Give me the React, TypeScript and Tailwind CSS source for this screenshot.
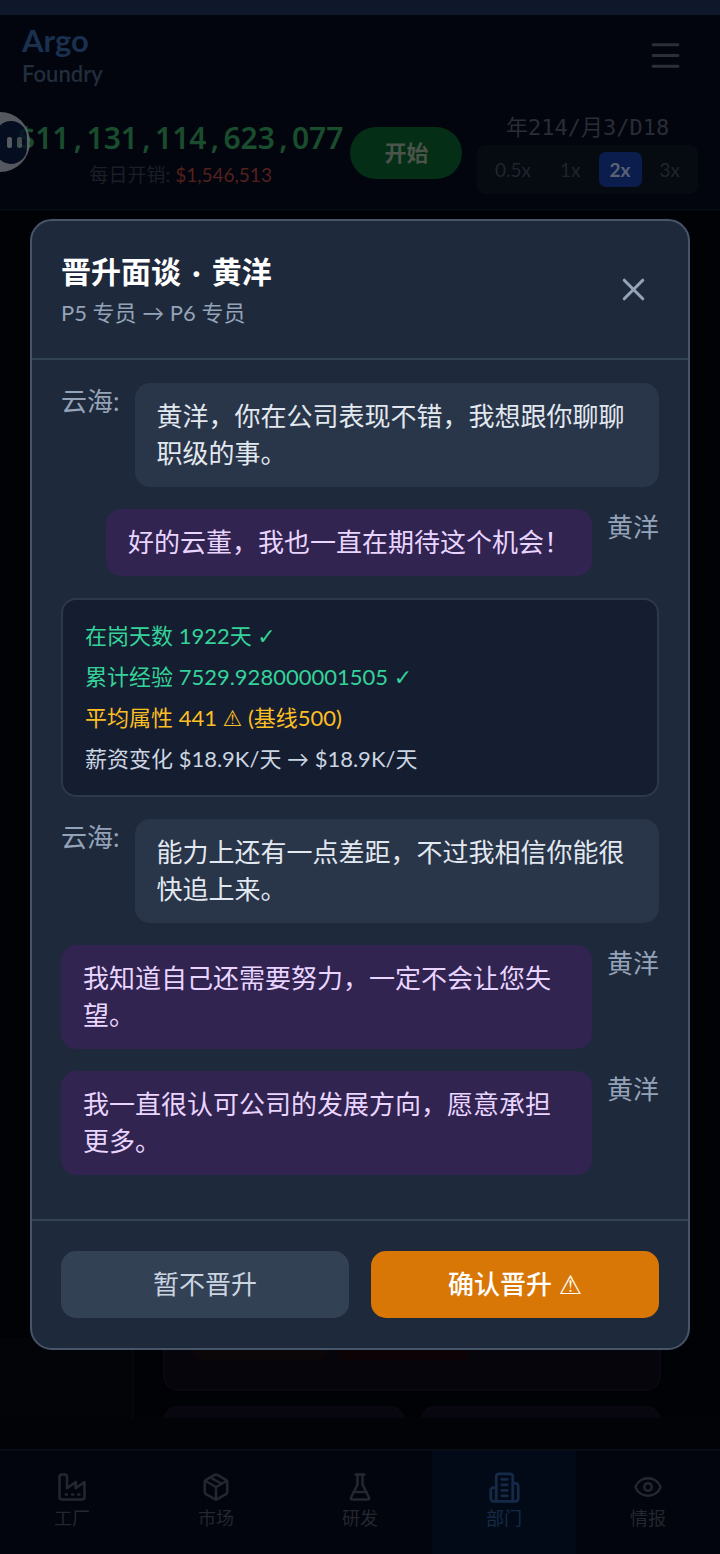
import { Package, Eye, Menu, X } from "lucide-react";
import type { ReactNode } from "react";

const speeds = ["0.5x", "1x", "2x", "3x"];

type IconProps = { size: number };

function Stroke({ size, children }: IconProps & { children: ReactNode }) {
  return (
    <svg
      width={size}
      height={size}
      viewBox="0 0 24 24"
      fill="none"
      stroke="currentColor"
      strokeWidth={2}
      strokeLinecap="round"
      strokeLinejoin="round"
      aria-hidden="true"
    >
      {children}
    </svg>
  );
}

function FactoryIcon({ size }: IconProps) {
  return (
    <Stroke size={size}>
      <path d="M2 20a2 2 0 0 0 2 2h16a2 2 0 0 0 2-2V8l-7 5V8l-7 5V4a2 2 0 0 0-2-2H4a2 2 0 0 0-2 2Z" />
      <path d="M17 18h1M12 18h1M7 18h1" />
    </Stroke>
  );
}

function FlaskIcon({ size }: IconProps) {
  return (
    <Stroke size={size}>
      <path d="M10 2v7.53a2 2 0 0 1-.21.9L4.72 20.55a1 1 0 0 0 .9 1.45h12.76a1 1 0 0 0 .9-1.45l-5.07-10.12a2 2 0 0 1-.21-.9V2" />
      <path d="M8.5 2h7M7 16h10" />
    </Stroke>
  );
}

function BuildingIcon({ size }: IconProps) {
  return (
    <Stroke size={size}>
      <path d="M6 22V4a2 2 0 0 1 2-2h8a2 2 0 0 1 2 2v18Z" />
      <path d="M6 12H4a2 2 0 0 0-2 2v6a2 2 0 0 0 2 2h2M18 9h2a2 2 0 0 1 2 2v9a2 2 0 0 1-2 2h-2" />
      <path d="M10 6h4M10 10h4M10 14h4M10 18h4" />
    </Stroke>
  );
}

const tabs = [
  { label: "工厂", Icon: FactoryIcon },
  { label: "市场", Icon: Package },
  { label: "研发", Icon: FlaskIcon },
  { label: "部门", Icon: BuildingIcon, active: true },
  { label: "情报", Icon: Eye },
];

function Symbol({ children }: { children: string }) {
  return <span className="font-['DejaVu_Sans',sans-serif] leading-none font-normal">{children}</span>;
}

function Money({ value }: { value: string }) {
  const groups = value.split(",");
  return (
    <p className="whitespace-nowrap font-['Noto_Sans',sans-serif] text-[30px] leading-[37px] font-semibold text-[#1a4c2e]">
      {groups.map((group, i) => (
        <span key={i}>
          {group}
          {i < groups.length - 1 && <span className="inline-block w-[17px] text-center">,</span>}
        </span>
      ))}
    </p>
  );
}

function Header() {
  return (
    <header className="relative border-b-2 border-[#060a12] bg-[#02050d]">
      <div className="flex items-start justify-between pt-[7px] pr-[36px] pl-[22px]">
        <div>
          <h1 className="text-[31px] leading-[37px] font-bold text-[#19304f]">Argo</h1>
          <p className="text-[22px] leading-[30px] font-semibold text-[#222d3d]">Foundry</p>
        </div>
        <button type="button" aria-label="菜单" className="mt-[15px] text-[#2b2f38]">
          <Menu size={37} strokeWidth={2} />
        </button>
      </div>
      <div className="flex items-start gap-[7px] pt-[22px] pr-[22px] pb-[15px] pl-[18px]">
        <div className="pt-[8px] text-center">
          <Money value="$11,131,114,623,077" />
          <p className="text-[19px] leading-[37px] text-[#1a1f27]">
            每日开销: <span className="text-[#54201f]">$1,546,513</span>
          </p>
        </div>
        <button
          type="button"
          className="mt-[16px] shrink-0 rounded-full bg-[#052e16] px-[34px] text-[22px] leading-[52px] font-bold text-[#4a544a]"
        >
          开始
        </button>
        <div className="ml-auto flex flex-col items-center">
          <p className="font-['DejaVu_Sans_Mono','Noto_Sans_CJK_SC',monospace] text-[22px] leading-[34px] text-[#292d35]">
            年214/月3/D18
          </p>
          <div className="flex gap-[7px] rounded-[8px] bg-[#060a11] p-[7px]">
            {speeds.map((s) => (
              <button
                key={s}
                type="button"
                className={
                  s === "2x"
                    ? "rounded-[7px] bg-[#0b1d4c] px-[11px] text-[19px] leading-[35px] font-bold text-[#5a6275]"
                    : "px-[11px] text-[19px] leading-[35px] text-[#20252d]"
                }
              >
                {s}
              </button>
            ))}
          </div>
        </div>
      </div>
      <div className="absolute top-[97px] left-[-30px] flex size-[60px] items-center justify-end rounded-full bg-[#6a6d74] pr-[3px] opacity-80">
        <div className="flex h-[43px] w-[32px] items-center justify-end gap-[5px] rounded-full bg-[#061025] pr-[5px]">
          <span className="h-[11px] w-[5px] rounded-[2px] bg-[#6c7079]" />
          <span className="h-[11px] w-[5px] rounded-[2px] bg-[#53605f]" />
        </div>
      </div>
    </header>
  );
}

function Backdrop() {
  return (
    <div className="flex flex-1 flex-col justify-end bg-[#010206]">
      <div className="flex h-[80px] overflow-hidden">
        <div className="w-[134px] border-r-2 border-[#06080c] bg-[#020408]" />
        <div className="flex flex-1 flex-col gap-[15px] pr-[59px] pl-[29px]">
          <div className="flex h-[53px] shrink-0 items-start rounded-b-[15px] border-2 border-t-0 border-[#0b0811] bg-[#06050b] px-[29px]">
            <div className="h-[22px] w-[132px] rounded-b-[7px] bg-[#0b0607]" />
            <div className="ml-[11px] h-[22px] w-[132px] rounded-b-[7px] bg-[#0d0307]" />
          </div>
          <div className="flex gap-[15px]">
            <div className="h-[60px] flex-1 rounded-[15px] border-2 border-[#0b0811] bg-[#08060e]" />
            <div className="h-[60px] flex-1 rounded-[15px] border-2 border-[#0b0811] bg-[#08060e]" />
          </div>
        </div>
      </div>
      <div className="h-[31px] bg-[#020307]" />
    </div>
  );
}

function TabBar() {
  return (
    <nav className="flex border-t-2 border-[#080c14] bg-[#02050d]">
      {tabs.map(({ label, Icon, active }) => (
        <button
          key={label}
          type="button"
          className={
            active
              ? "flex flex-1 flex-col items-center bg-[#030a17] pt-[18px] pb-[22px] text-[#162a48]"
              : "flex flex-1 flex-col items-center pt-[18px] pb-[22px] text-[#23272f]"
          }
        >
          <span className="flex h-[36px] items-center">
            <Icon size={active ? 33 : 30} />
          </span>
          <span className="text-[18px] leading-[27px]">{label}</span>
        </button>
      ))}
    </nav>
  );
}

function Line({ name, mine, children }: { name: string; mine?: boolean; children: ReactNode }) {
  return (
    <div className="flex items-start gap-[15px] text-[26px] leading-[37px]">
      {!mine && <span className="shrink-0 text-[#94a3b8]">{name}</span>}
      <p
        className={
          mine
            ? "ml-auto rounded-[15px] bg-[#312450] px-[22px] py-[15px] text-[#e9d5ff]"
            : "flex-1 rounded-[15px] bg-[#293548] px-[22px] py-[15px] text-[#e2e8f0]"
        }
      >
        {children}
      </p>
      {mine && <span className="shrink-0 text-[#94a3b8]">{name}</span>}
    </div>
  );
}

function PromotionDialog() {
  return (
    <div
      role="dialog"
      aria-modal="true"
      aria-labelledby="dialog-title"
      className="w-full rounded-[22px] border-2 border-[#475569] bg-[#1e293b]"
    >
      <div className="flex items-center justify-between border-b-2 border-[#334155] px-[29px] py-[30px]">
        <div>
          <h2 id="dialog-title" className="text-[30px] leading-[40px] font-bold text-white">
            晋升面谈 <span className="px-1">·</span> 黄洋
          </h2>
          <p className="mt-[7px] text-[22px] leading-[30px] text-[#94a3b8]">P5 专员 → P6 专员</p>
        </div>
        <button type="button" aria-label="关闭" className="p-[7px] text-[#94a3b8]">
          <X size={37} strokeWidth={2} />
        </button>
      </div>
      <div className="flex flex-col gap-[22px] px-[29px] pt-[23px] pb-[44px]">
        <Line name="云海:">黄洋，你在公司表现不错，我想跟你聊聊职级的事。</Line>
        <Line name="黄洋" mine>
          好的云董，我也一直在期待这个机会！
        </Line>
        <div className="flex flex-col gap-[11px] rounded-[15px] border-2 border-[#2c394c] bg-[#151d30] px-[22px] py-[21px] text-[22px] leading-[30px]">
          <p className="text-[#34d399]">
            在岗天数 1922天 <Symbol>✓</Symbol>
          </p>
          <p className="text-[#34d399]">
            累计经验 7529.928000001505 <Symbol>✓</Symbol>
          </p>
          <p className="text-[#fbbf24]">
            平均属性 441 <Symbol>⚠</Symbol> (基线500)
          </p>
          <p className="text-[#cbd5e1]">薪资变化 $18.9K/天 → $18.9K/天</p>
        </div>
        <Line name="云海:">能力上还有一点差距，不过我相信你能很快追上来。</Line>
        <Line name="黄洋" mine>
          我知道自己还需要努力，一定不会让您失望。
        </Line>
        <Line name="黄洋" mine>
          我一直很认可公司的发展方向，愿意承担更多。
        </Line>
      </div>
      <div className="flex gap-[22px] border-t-2 border-[#334155] px-[29px] py-[30px] text-[26px] leading-[37px]">
        <button type="button" className="flex-1 rounded-[15px] bg-[#334155] py-[15px] text-[#cbd5e1]">
          暂不晋升
        </button>
        <button type="button" className="flex-1 rounded-[15px] bg-[#d97706] py-[15px] font-medium text-white">
          确认晋升 <Symbol>⚠</Symbol>
        </button>
      </div>
    </div>
  );
}

export default function App() {
  return (
    <div className="flex min-h-screen flex-col bg-[#010206] font-['Lato','Noto_Sans_CJK_SC',sans-serif]">
      <div className="h-[15px] bg-[#0f172a]" />
      <div className="relative flex flex-1 flex-col overflow-hidden">
        <Header />
        <Backdrop />
        <TabBar />
        <div className="absolute inset-0 flex items-center justify-center px-[30px]">
          <PromotionDialog />
        </div>
      </div>
    </div>
  );
}
